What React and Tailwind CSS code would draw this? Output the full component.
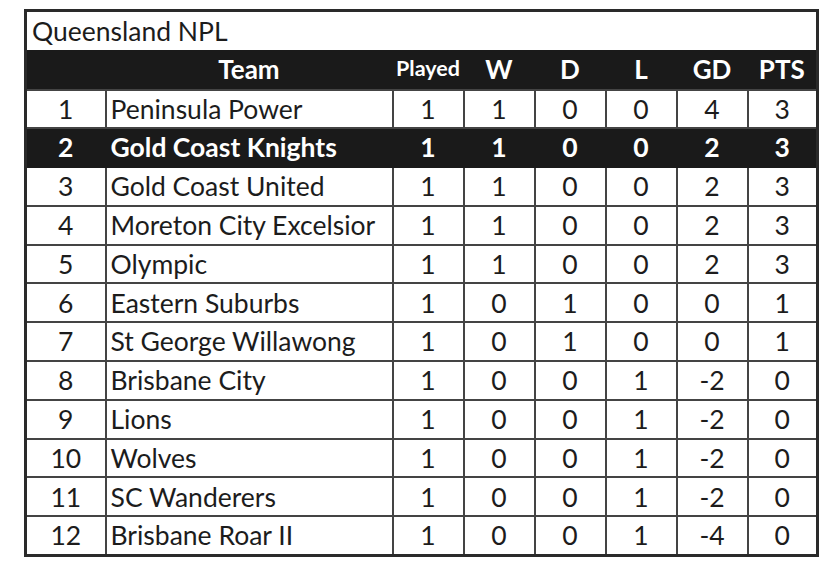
import React from "react";

const rows = [
  [1, "Peninsula Power", 1, 1, 0, 0, 4, 3],
  [2, "Gold Coast Knights", 1, 1, 0, 0, 2, 3],
  [3, "Gold Coast United", 1, 1, 0, 0, 2, 3],
  [4, "Moreton City Excelsior", 1, 1, 0, 0, 2, 3],
  [5, "Olympic", 1, 1, 0, 0, 2, 3],
  [6, "Eastern Suburbs", 1, 0, 1, 0, 0, 1],
  [7, "St George Willawong", 1, 0, 1, 0, 0, 1],
  [8, "Brisbane City", 1, 0, 0, 1, -2, 0],
  [9, "Lions", 1, 0, 0, 1, -2, 0],
  [10, "Wolves", 1, 0, 0, 1, -2, 0],
  [11, "SC Wanderers", 1, 0, 0, 1, -2, 0],
  [12, "Brisbane Roar II", 1, 0, 0, 1, -4, 0],
];

export default function App() {
  return (
    <div className="w-[829px] h-[563px] bg-white pt-[9px] pl-[24px] font-['Lato',sans-serif]">
      <table className="border-collapse border-[3px] border-[#2a2a2a] table-fixed w-[792px] text-[#1c1c1c] text-[26.5px]">
        <colgroup>
          <col className="w-[80px]" />
          <col className="w-[287px]" />
          <col className="w-[71px]" />
          <col className="w-[71px]" />
          <col className="w-[71px]" />
          <col className="w-[71px]" />
          <col className="w-[71px]" />
          <col className="w-[70px]" />
        </colgroup>
        <thead>
          <tr className="h-[39px]">
            <td colSpan={8} className="px-[5px] text-left leading-none">
              Queensland NPL
            </td>
          </tr>
          <tr className="h-[40px] bg-[#1a1a1a] text-white font-bold leading-none text-[26px]">
            <th></th>
            <th className="text-center">Team</th>
            <th className="text-[21.5px]">Played</th>
            <th>W</th>
            <th>D</th>
            <th>L</th>
            <th>GD</th>
            <th>PTS</th>
          </tr>
        </thead>
        <tbody>
          {rows.map((r) => {
            const hi = r[0] === 2;
            return (
              <tr
                key={r[0]}
                className={
                  hi
                    ? "h-[38.8px] bg-[#1a1a1a] text-white font-bold leading-none"
                    : "h-[38.8px] leading-none"
                }
              >
                {r.map((v, i) => (
                  <td
                    key={i}
                    className={
                      (hi ? "border-[#1a1a1a] " : "border-[#444] ") +
                      "border-2 " +
                      (i === 1 ? "text-left pl-[4px]" : "text-center")
                    }
                  >
                    {v}
                  </td>
                ))}
              </tr>
            );
          })}
        </tbody>
      </table>
    </div>
  );
}
